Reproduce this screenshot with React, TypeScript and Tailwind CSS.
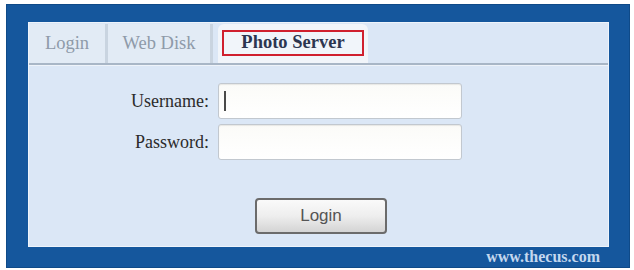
export default function App() {
  const serif = { fontFamily: '"Liberation Serif", "Times New Roman", serif' };
  return (
    <div className="w-[634px] h-[270px] bg-white pt-[4px] pl-[6px] pr-[4px] pb-[2px]">
      <div className="w-full h-full bg-[#15579d] pt-[17px] pl-[21px] pr-[20px] flex flex-col border border-[#0f4a88]">
        <div className="h-[225px] bg-[#dbe7f6] border border-[#eef4fb] flex flex-col">
          {/* tabs */}
          <div className="h-[40px] flex items-stretch pt-[1px]" style={serif}>
            <div className="w-[79px] bg-[#e2ebf5] border-r-[3px] border-[#c9d4e0] flex items-center justify-center text-[18.5px] text-[#8e9aa9]">
              Login
            </div>
            <div className="w-[105px] bg-[#e2ebf5] border-r-[3px] border-[#c9d4e0] flex items-center justify-center text-[18.5px] text-[#8e9aa9]">
              Web Disk
            </div>
            <div className="ml-[5px] w-[150px] bg-[#f1f5fa] rounded-t-[6px] flex items-center justify-center">
              <div className="w-[142px] h-[26px] border-2 border-[#d0202e] flex items-center justify-center text-[18.5px] leading-none font-bold text-[#2c3650] mt-[-2px]">
                Photo Server
              </div>
            </div>
          </div>
          <div className="h-[3px] bg-[#a8b6c6] border-b border-[#eef3f9]" />
          {/* form */}
          <div className="flex flex-col pt-[17px]">
            <div className="flex items-center">
              <div className="w-[180px] text-right text-[18px] text-[#2b2b2b]" style={serif}>
                Username:
              </div>
              <div className="ml-[9px] w-[244px] h-[36px] rounded-[3px] border border-[#c2c8cf] bg-gradient-to-b from-[#fbfbf8] to-[#ffffff] shadow-[inset_0_1px_1px_rgba(0,0,0,0.08)] flex items-center pl-[5px]">
                <div className="w-[2px] h-[20px] bg-[#4a4a4a]" />
              </div>
            </div>
            <div className="flex items-center mt-[5px]">
              <div className="w-[180px] text-right text-[18px] text-[#2b2b2b]" style={serif}>
                Password:
              </div>
              <div className="ml-[9px] w-[244px] h-[36px] rounded-[3px] border border-[#c2c8cf] bg-gradient-to-b from-[#fbfbf8] to-[#ffffff] shadow-[inset_0_1px_1px_rgba(0,0,0,0.08)]" />
            </div>
            <div className="pl-[226px] mt-[38px]">
              <div
                className="w-[132px] h-[36px] rounded-[4px] border-2 border-[#6b6b6b] bg-gradient-to-b from-[#fafafa] via-[#eeeeee] to-[#d4d4d4] flex items-center justify-center text-[17px] text-[#555555]"
                style={{ fontFamily: '"Liberation Sans", Arial, sans-serif' }}
              >
                Login
              </div>
            </div>
          </div>
        </div>
        <div className="flex-1 flex items-center justify-end pr-[9px]">
          <span className="text-[16px] font-bold text-[#c4d8ef] leading-none" style={serif}>
            www.thecus.com
          </span>
        </div>
      </div>
    </div>
  );
}
